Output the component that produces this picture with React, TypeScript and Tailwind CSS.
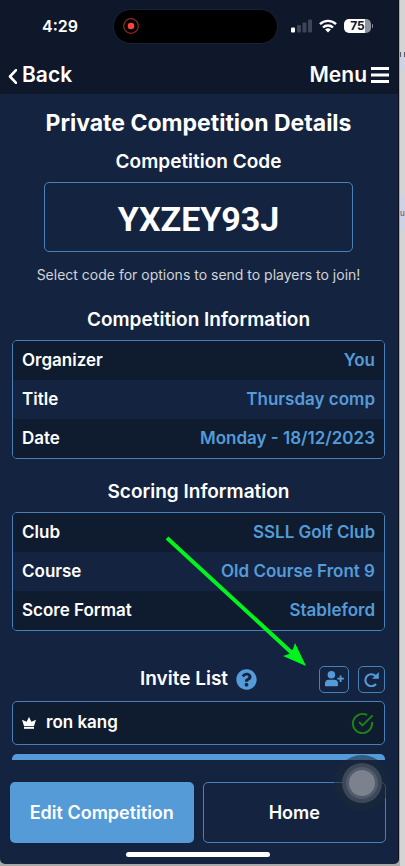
import React from "react";
import { FaQuestionCircle } from "react-icons/fa";
import { FiCheckCircle } from "react-icons/fi";

const competitionInfo = [
  { label: "Organizer", value: "You" },
  { label: "Title", value: "Thursday comp" },
  { label: "Date", value: "Monday - 18/12/2023" },
];

const scoringInfo = [
  { label: "Club", value: "SSLL Golf Club" },
  { label: "Course", value: "Old Course Front 9" },
  { label: "Score Format", value: "Stableford" },
];

function StatusBar() {
  return (
    <div className="flex items-center pl-[42px] pr-[25px] pt-2">
      <span className="w-[71px] text-[16px] leading-9 font-semibold">4:29</span>
      <div className="flex h-[35px] w-[165px] items-center rounded-full border border-[#182238] bg-black pl-2">
        <svg width="18" height="18" viewBox="0 0 18 18">
          <circle cx="9" cy="9" r="7.3" fill="none" stroke="#8f2a26" strokeWidth="1.2" />
          <circle cx="9" cy="9" r="3.3" fill="#fb4439" />
        </svg>
      </div>
      <div className="ml-auto flex items-center gap-[7px]">
        <svg width="21" height="14" viewBox="0 0 21 14">
          <rect x="0" y="8.5" width="4" height="5" rx="1" fill="#fff" />
          <rect x="6" y="6" width="4" height="7.5" rx="1" fill="#3d4558" />
          <rect x="11.5" y="3.5" width="4" height="10" rx="1" fill="#3d4558" />
          <rect x="17" y="0.5" width="4" height="13" rx="1" fill="#3d4558" />
        </svg>
        <svg width="18" height="14" viewBox="0 0 18 14" fill="none" stroke="#fff" strokeWidth="2.4">
          <path d="M1 5.2a11.4 11.4 0 0 1 16 0" />
          <path d="M4 8.5a7.2 7.2 0 0 1 10 0" />
          <path d="M9 13.4 6.1 10.6a4.2 4.2 0 0 1 5.8 0Z" fill="#fff" stroke="none" />
        </svg>
        <div className="flex items-center gap-px">
          <div className="h-[14px] w-[27px] rounded-[5px] bg-linear-to-r from-white from-78% to-[#8e929d] to-78% text-center text-[12px] leading-[14px] font-bold text-[#10182b]">
            75
          </div>
          <div className="h-1 w-px rounded-r bg-[#8e929d]" />
        </div>
      </div>
    </div>
  );
}

function InfoTable({ rows }: { rows: { label: string; value: string }[] }) {
  return (
    <div className="overflow-hidden rounded-[5px] border border-[#4682b9]">
      <table className="w-full text-[17px] leading-[39px]">
        <tbody>
          {rows.map((row) => (
            <tr key={row.label} className="odd:bg-[#0f1c2f]">
              <th scope="row" className="pl-[9px] text-left font-semibold">{row.label}</th>
              <td className="pr-[9px] text-right font-semibold text-[#549bd8]">{row.value}</td>
            </tr>
          ))}
        </tbody>
      </table>
    </div>
  );
}

export default function App() {
  return (
    <div className="flex h-screen overflow-hidden bg-[#a9a9a9] font-['Inter',sans-serif] text-white">
      <div className="relative mb-[2px] flex min-w-0 flex-1 flex-col overflow-hidden rounded-b-[5px] border-r border-[#0a0f1a] bg-[#142440]">
        <header className="bg-[#0f172a]">
          <StatusBar />
          <nav className="flex items-center justify-between pt-[15px] pr-[9px] pb-[3px] pl-2 text-[21px] leading-8 font-semibold">
            <button className="flex items-center gap-[5px]">
              <svg width="9" height="15" viewBox="0 0 9 15" fill="none" stroke="#fff" strokeWidth="2.6" className="mt-[2px]">
                <path d="M8 1.2 2 7.5 8 13.8" strokeLinecap="round" strokeLinejoin="round" />
              </svg>
              Back
            </button>
            <button className="flex items-center gap-1">
              Menu
              <svg width="18" height="16" viewBox="0 0 18 16" fill="#fff">
                <path d="M0 0h18v3H0zM0 6.5h18v3H0zM0 13h18v3H0z" />
              </svg>
            </button>
          </nav>
        </header>

        <main className="min-h-0 flex-1 overflow-hidden pt-[13px] pr-[13px] pl-3">
          <h1 className="text-center text-[23px] leading-8 font-bold">Private Competition Details</h1>

          <h2 className="mt-[9px] text-center text-[19px] leading-7 font-semibold">Competition Code</h2>
          <div className="mt-[6px] px-8">
            <button className="h-[70px] w-full rounded-[5px] border border-[#4682b9] pt-1 font-['Roboto',sans-serif] text-[34px] font-bold">
              YXZEY93J
            </button>
          </div>
          <p className="mt-[11px] text-center text-[14px] leading-6 text-[#d0d3d9]">
            Select code for options to send to players to join!
          </p>

          <h2 className="mt-[19px] mb-[6px] text-center text-[19px] leading-7 font-semibold">Competition Information</h2>
          <InfoTable rows={competitionInfo} />

          <h2 className="mt-[19px] mb-[6px] text-center text-[19px] leading-7 font-semibold">Scoring Information</h2>
          <InfoTable rows={scoringInfo} />

          {/* Invite list */}
          <div className="mt-[34px] grid grid-cols-[1fr_auto_1fr] items-center">
            <h2 className="col-start-2 flex items-center gap-2 text-[19px] leading-7 font-semibold">
              Invite List
              <FaQuestionCircle size={21} className="text-[#549bd8]" />
            </h2>
            <div className="flex justify-end gap-[9px] text-[#549bd8]">
              <button aria-label="Add player" className="flex h-[27px] w-[30px] items-center justify-center rounded-[5px] border border-[#4682b9]">
                <svg width="19" height="16" viewBox="0 0 19 16" fill="currentColor">
                  <circle cx="6.4" cy="3.8" r="3.8" />
                  <path d="M0 15.2v-2.4a4 4 0 0 1 4-4h5a4 4 0 0 1 4 4v1.4a1 1 0 0 1-1 1Z" />
                  <path d="M14.7 4.4h1.8v2.4h2.4v1.8h-2.4V11h-1.8V8.600h-2.400V6.800h2.400Z" />
                </svg>
              </button>
              <button aria-label="Refresh" className="flex h-[27px] w-[27px] items-center justify-center rounded-[5px] border border-[#4682b9]">
                <svg width="15" height="15" viewBox="0 0 15 15" fill="none" stroke="currentColor">
                  <path d="M12 4.4A6 6 0 1 0 12 12" strokeWidth="2.1" />
                  <path d="M14.800 0v6.700H8Z" fill="currentColor" stroke="none" />
                </svg>
              </button>
            </div>
          </div>
          <div className="mt-2 flex h-11 items-center rounded-[5px] border border-[#4682b9] bg-[#0f1c2f] pr-[10px] pl-[9px]">
            <svg width="14" height="12" viewBox="0 0 14 12" fill="#fff">
              <path d="M7 0 9.400 4.700 14 2.700 12 9H2L0 2.700 4.600 4.700Z" />
              <path d="M2 9.800h10v2H2Z" />
            </svg>
            <span className="ml-[10px] flex-1 text-[17px] font-semibold">ron kang</span>
            <FiCheckCircle size={23} strokeWidth={2} className="text-[#1f8412]" />
          </div>
          <button aria-label="Invite players" className="mt-[9px] h-11 w-full rounded-[5px] bg-[#549bd8]" />
        </main>

        <footer className="pt-[22px] pr-3 pb-[7px] pl-[10px]">
          <div className="grid grid-cols-2 gap-[9px] text-[18px] font-semibold">
            <button className="h-[61px] rounded-[5px] bg-[#549bd8]">Edit Competition</button>
            <button className="h-[61px] rounded-[5px] border border-[#4682b9]">Home</button>
          </div>
          <div className="mx-auto mt-[9px] h-[5px] w-36 rounded-full bg-white" />
        </footer>

        {/* Assistive touch */}
        <div className="absolute right-[8px] bottom-[53px] flex size-14 items-center justify-center rounded-full bg-[#1c2837]/55">
          <div className="flex size-10 items-center justify-center rounded-full bg-[#3c475a]">
            <div className="flex size-8 items-center justify-center rounded-full bg-[#525b6c]">
              <div className="size-[26px] rounded-full bg-[#7c818e]" />
            </div>
          </div>
        </div>

        {/* Pointer to the add player button */}
        <svg className="pointer-events-none absolute top-[536px] right-[90px]" width="142" height="132" viewBox="0 0 142 132">
          <path d="M1 2 126 117" stroke="#00f51d" strokeWidth="4" />
          <path d="M140 130 117 120 123 118 127 113 129 107Z" fill="#00f51d" />
        </svg>
      </div>

      {/* Edge of the window behind */}
      <div className="flex w-[6px] flex-col overflow-hidden border-l border-[#a9a9a9] bg-[#d4d4d4] text-[8px] text-[#4b4b55]">
        <div className="mt-[52px] flex h-[19px] justify-between bg-[#cfd2e4]">
          <span className="h-[5px] w-px bg-[#5b5b66]" />
          <span className="h-[5px] w-px bg-[#5b5b66]" />
        </div>
        <div className="mt-[124px] h-9 bg-[#cfd2e4] leading-9">u</div>
      </div>
    </div>
  );
}
